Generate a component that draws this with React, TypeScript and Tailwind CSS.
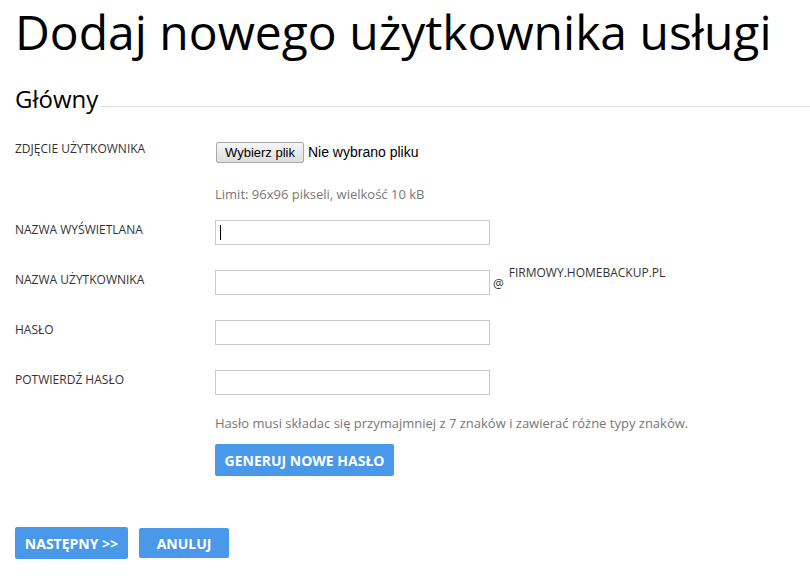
export default function App() {
  const font = { fontFamily: '"Open Sans", sans-serif' }
  return (
    <div className="w-[810px] h-[576px] bg-white text-[#333] overflow-hidden" style={font}>
      <h1 className="pl-[15px] pt-[2px] text-[48px] leading-[60px] text-black whitespace-nowrap">
        Dodaj nowego użytkownika usługi
      </h1>

      <div className="flex items-end mt-[22px] pl-[15px]">
        <h2 className="text-[24px] leading-[30px] text-black">Główny</h2>
        <div className="flex-1 h-px bg-[#ddd] mb-[7px] ml-[2px]" />
      </div>

      <div className="pl-[15px] mt-[26px]">
        <div className="flex">
          <div className="w-[200px] text-[12px] leading-[18px] uppercase">Zdjęcie użytkownika</div>
          <div className="flex items-center mt-[2px]" style={{ fontFamily: '"Liberation Sans", Arial, sans-serif' }}>
            <button className="h-[21px] px-[8px] ml-px border border-[#a9a9a9] rounded-[2px] bg-gradient-to-b from-[#f6f6f6] to-[#dedede] text-black text-[13px]">
              Wybierz plik
            </button>
            <span className="ml-[4px] text-black text-[14px]">Nie wybrano pliku</span>
          </div>
        </div>
        <div className="ml-[200px] mt-[22px] text-[13px] leading-[18px] text-[#777]">
          Limit: 96x96 pikseli, wielkość 10 kB
        </div>

        <div className="flex mt-[17px]">
          <div className="w-[200px] pt-[1px] text-[12px] leading-[18px] uppercase">Nazwa wyświetlana</div>
          <div className="w-[275px] h-[25px] border border-[#c8c8c8] flex items-center pl-[4px]">
            <div className="w-px h-[15px] bg-black" />
          </div>
        </div>

        <div className="flex mt-[25px]">
          <div className="w-[200px] pt-[1px] text-[12px] leading-[18px] uppercase">Nazwa użytkownika</div>
          <div className="w-[275px] h-[25px] border border-[#c8c8c8]" />
          <div className="ml-[3px] mt-[5px] text-[12px]">@</div>
          <div className="ml-[5px] -mt-[6px] text-[12px] leading-[18px] uppercase">firmowy.homebackup.pl</div>
        </div>

        <div className="flex mt-[25px]">
          <div className="w-[200px] pt-[1px] text-[12px] leading-[18px] uppercase">Hasło</div>
          <div className="w-[275px] h-[25px] border border-[#c8c8c8]" />
        </div>

        <div className="flex mt-[25px]">
          <div className="w-[200px] pt-[1px] text-[12px] leading-[18px] uppercase">Potwierdź hasło</div>
          <div className="w-[275px] h-[25px] border border-[#c8c8c8]" />
        </div>

        <div className="ml-[200px] mt-[19px] text-[13px] leading-[18px] text-[#777]">
          Hasło musi składac się przymajmniej z 7 znaków i zawierać różne typy znaków.
        </div>
        <button className="block ml-[200px] mt-[12px] h-[32px] w-[179px] rounded-[2px] bg-[#4a98e9] text-white text-[14px] font-bold uppercase">
          Generuj nowe hasło
        </button>

        <div className="flex items-center gap-[11px] mt-[51px]">
          <button className="h-[32px] w-[113px] rounded-[2px] bg-[#4a98e9] text-white text-[14px] font-bold uppercase">
            Następny &gt;&gt;
          </button>
          <button className="h-[30px] w-[90px] rounded-[2px] bg-[#4a98e9] text-white text-[14px] font-bold uppercase">
            Anuluj
          </button>
        </div>
      </div>
    </div>
  )
}
